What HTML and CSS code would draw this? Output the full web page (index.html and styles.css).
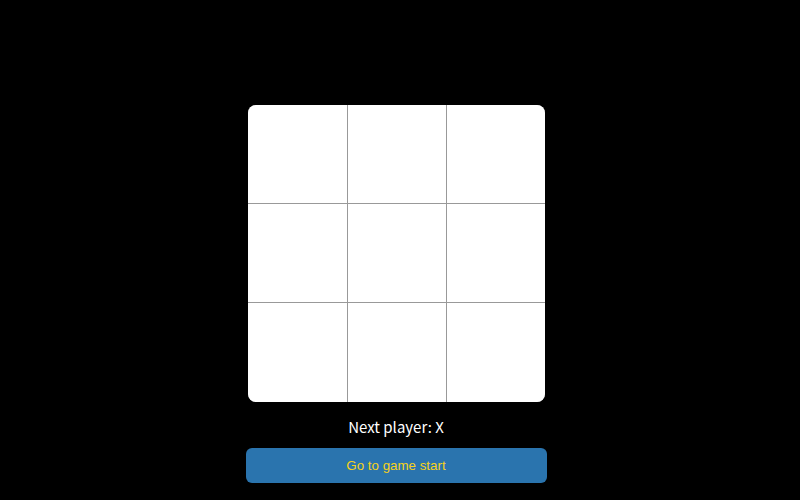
FILE: index.html
```html
<!DOCTYPE html>
<html>
<head>
<meta charset="utf-8">
<link rel="stylesheet" href="styles.css">
</head>
<body>
<main class="game">
  <div class="board">
    <button class="cell"></button>
    <button class="cell"></button>
    <button class="cell"></button>
    <button class="cell"></button>
    <button class="cell"></button>
    <button class="cell"></button>
    <button class="cell"></button>
    <button class="cell"></button>
    <button class="cell"></button>
  </div>
  <div class="status">Next player: X</div>
  <button class="history">Go to game start</button>
</main>
</body>
</html>
```

FILE: styles.css
```css
html, body {
  margin: 0;
  padding: 0;
  background: #000;
  height: 100%;
}
body {
  padding-right: 8px;
  box-sizing: border-box;
}
.game {
  display: flex;
  flex-direction: column;
  align-items: center;
  padding-top: 105px;
}
.board {
  display: grid;
  grid-template-columns: 99px 98px 98px;
  grid-template-rows: 98px 98px 99px;
  gap: 1px;
  background: #999;
  border-radius: 8px;
  overflow: hidden;
  width: 297px;
  height: 297px;
}
.cell {
  background: #fff;
  border: none;
  padding: 0;
  margin: 0;
}
.status {
  margin-top: 14px;
  margin-bottom: 1px;
  color: #fff;
  font-family: "Noto Sans CJK KR", "Noto Sans", sans-serif;
  font-size: 15px;
  line-height: 21px;
}
.history {
  margin-top: 10px;
  width: 301px;
  height: 35px;
  background: #2a74ae;
  color: #f7d21a;
  border: none;
  border-radius: 6px;
  font-family: "Liberation Sans", Arial, sans-serif;
  font-size: 13.333px;
  padding: 0;
}
```
